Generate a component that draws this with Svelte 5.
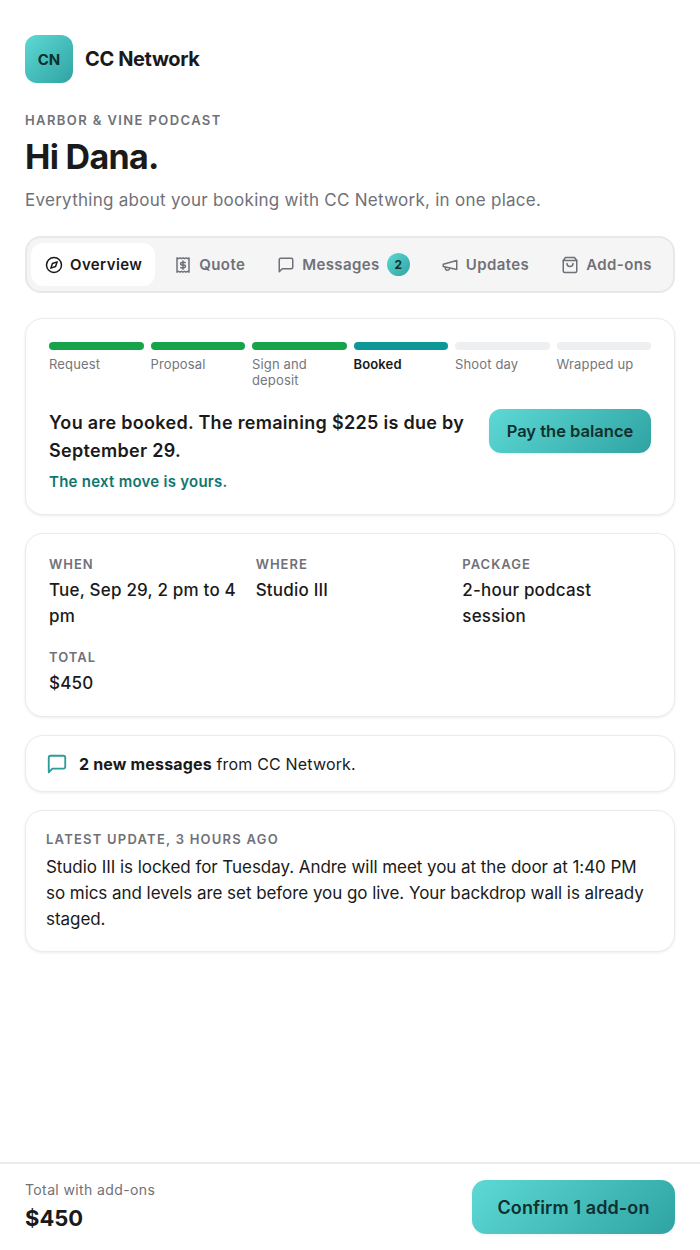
<script>
  const tabs = [
    { id: "overview", label: "Overview" },
    { id: "quote", label: "Quote" },
    { id: "messages", label: "Messages", badge: 2 },
    { id: "updates", label: "Updates" },
    { id: "addons", label: "Add-ons" },
  ];

  const steps = [
    { label: "Request", state: "done" },
    { label: "Proposal", state: "done" },
    { label: "Sign and deposit", state: "done" },
    { label: "Booked", state: "current" },
    { label: "Shoot day", state: "todo" },
    { label: "Wrapped up", state: "todo" },
  ];

  const facts = [
    { label: "When", value: "Tue, Sep 29, 2 pm to 4 pm" },
    { label: "Where", value: "Studio III" },
    { label: "Package", value: "2-hour podcast session" },
    { label: "Total", value: "$450" },
  ];

  let active = $state("overview");
</script>

<div class="page">
  <main>
    <header class="brand">
      <div class="logo">CN</div>
      <span class="brand-name">CC Network</span>
    </header>

    <section class="intro">
      <p class="eyebrow">Harbor &amp; Vine Podcast</p>
      <h1>Hi Dana.</h1>
      <p class="lead">Everything about your booking with CC Network, in one place.</p>
    </section>

    <nav class="tabs">
      {#each tabs as tab}
        <button class="tab" class:active={active === tab.id} onclick={() => (active = tab.id)}>
          <svg viewBox="0 0 24 24" class="icon">
            {#if tab.id === "overview"}
              <circle cx="12" cy="12" r="10" />
              <path d="m16.2 7.8-2.1 6.3-6.3 2.1 2.1-6.3z" />
            {:else if tab.id === "quote"}
              <path d="M4 2.500v19l2-1 2 1 2-1 2 1 2-1 2 1 2-1 2 1v-19l-2 1-2-1-2 1-2-1-2 1-2-1-2 1z" />
              <path d="M15 8.500h-4.500a1.750 1.750 0 0 0 0 3.500h3a1.750 1.750 0 0 1 0 3.500H9M12 6.500v11" />
            {:else if tab.id === "messages"}
              <path d="M21 15a2 2 0 0 1-2 2H7l-4 4V5a2 2 0 0 1 2-2h14a2 2 0 0 1 2 2z" />
            {:else if tab.id === "updates"}
              <path d="m3 11 18-5v12L3 14z" />
              <path d="M11.600 16.800a3 3 0 1 1-5.800-1.600" />
            {:else}
              <path d="M6 2 3 6v14a2 2 0 0 0 2 2h14a2 2 0 0 0 2-2V6l-3-4z" />
              <path d="M3 6h18M16 10a4 4 0 0 1-8 0" />
            {/if}
          </svg>
          <span>{tab.label}</span>
          {#if tab.badge}<span class="badge">{tab.badge}</span>{/if}
        </button>
      {/each}
    </nav>

    <section class="card status">
      <ol class="steps">
        {#each steps as step}
          <li class={step.state}>
            <span class="bar"></span>
            <span class="step-label">{step.label}</span>
          </li>
        {/each}
      </ol>
      <div class="next">
        <div class="next-text">
          <p class="next-title">You are booked. The remaining $225 is due by September 29.</p>
          <p class="next-hint">The next move is yours.</p>
        </div>
        <button class="cta small">Pay the balance</button>
      </div>
    </section>

    <section class="card facts">
      {#each facts as fact}
        <div>
          <p class="fact-label">{fact.label}</p>
          <p class="fact-value">{fact.value}</p>
        </div>
      {/each}
    </section>

    <section class="card notice">
      <svg viewBox="0 0 24 24" class="icon notice-icon">
        <path d="M21 15a2 2 0 0 1-2 2H7l-4 4V5a2 2 0 0 1 2-2h14a2 2 0 0 1 2 2z" />
      </svg>
      <p><strong>2 new messages</strong> from CC Network.</p>
    </section>

    <section class="card update">
      <p class="update-label">Latest update, 3 hours ago</p>
      <p class="update-body">
        Studio III is locked for Tuesday. Andre will meet you at the door at 1:40 PM so mics and levels are set before you go live. Your backdrop wall is already staged.
      </p>
    </section>
  </main>

  <footer>
    <div class="total">
      <p class="total-label">Total with add-ons</p>
      <p class="total-value">$450</p>
    </div>
    <button class="cta large">Confirm 1 add-on</button>
  </footer>
</div>

<style>
  :global(body) {
    font-family: "Inter", "Open Sans", sans-serif;
    color: #1a1a1a;
    background: #fff;
  }

  p,
  h1,
  ol {
    margin: 0;
    padding: 0;
  }

  button {
    font-family: inherit;
    border: 0;
    cursor: pointer;
  }

  .page {
    min-height: 100vh;
    display: flex;
    flex-direction: column;
  }

  main {
    flex: 1;
    padding: 35px 25px 0;
  }

  .brand {
    display: flex;
    align-items: center;
    gap: 12px;
  }

  .logo {
    width: 48px;
    height: 48px;
    border-radius: 12px;
    background: linear-gradient(135deg, #5dd9d5, #2fa3a3);
    display: flex;
    align-items: center;
    justify-content: center;
    font-size: 15px;
    font-weight: 700;
    color: #10302f;
  }

  .brand-name {
    font-size: 20px;
    font-weight: 700;
    letter-spacing: -0.38px;
  }

  .intro {
    margin-top: 29px;
  }

  .eyebrow {
    font-size: 13px;
    line-height: 17px;
    font-weight: 600;
    letter-spacing: 1.4px;
    text-transform: uppercase;
    color: #6f7178;
  }

  h1 {
    margin-top: 8px;
    font-size: 34px;
    line-height: 40px;
    font-weight: 700;
    letter-spacing: -0.7px;
  }

  .lead {
    margin-top: 10px;
    font-size: 17px;
    line-height: 26px;
    letter-spacing: 0.27px;
    color: #6f7178;
  }

  .tabs {
    margin-top: 23px;
    height: 57px;
    box-sizing: border-box;
    padding: 5px 4px;
    display: flex;
    gap: 5px;
    background: #f5f5f5;
    border: 2px solid #e8e8e8;
    border-radius: 16px;
  }

  .tab {
    display: flex;
    align-items: center;
    gap: 7px;
    padding: 0 13px 0 14px;
    height: 43px;
    margin: 0;
    border-radius: 12px;
    background: none;
    font-size: 15px;
    font-weight: 600;
    letter-spacing: 0.4px;
    color: #6f7178;
    white-space: nowrap;
  }

  .tab.active {
    background: #fff;
    color: #1a1a1a;
  }

  .icon {
    width: 18px;
    height: 18px;
    flex: none;
    fill: none;
    stroke: currentColor;
    stroke-width: 2;
    stroke-linecap: round;
    stroke-linejoin: round;
  }

  .badge {
    width: 23px;
    height: 23px;
    margin-left: 0;
    margin-right: -1px;
    border-radius: 50%;
    background: linear-gradient(135deg, #5dd9d5, #2fa3a3);
    color: #10302f;
    font-size: 12px;
    font-weight: 700;
    letter-spacing: 0;
    display: flex;
    align-items: center;
    justify-content: center;
  }

  .card {
    background: #fff;
    border: 1px solid #ebebeb;
    border-radius: 18px;
    box-shadow: 0 1px 3px rgba(0, 0, 0, 0.08);
  }

  .status {
    margin-top: 25px;
    padding: 23px 23px 22px;
    height: 197px;
    box-sizing: border-box;
  }

  .steps {
    list-style: none;
    display: grid;
    grid-template-columns: repeat(6, 1fr);
    gap: 7px;
  }

  .steps li {
    display: flex;
    flex-direction: column;
    gap: 6px;
  }

  .bar {
    height: 8px;
    border-radius: 4px;
    background: #eeeff0;
  }

  .done .bar {
    background: #16a34a;
  }

  .current .bar {
    background: #0d9797;
  }

  .step-label {
    font-size: 13px;
    line-height: 16px;
    letter-spacing: 0.15px;
    color: #74767c;
  }

  .current .step-label {
    font-weight: 600;
    color: #1a1a1a;
  }

  .next {
    margin-top: 21px;
    display: flex;
    align-items: flex-start;
    gap: 24px;
  }

  .next-text {
    flex: 1;
  }

  .next-title {
    font-size: 18px;
    line-height: 28px;
    font-weight: 600;
    letter-spacing: 0.3px;
  }

  .next-hint {
    margin-top: 7px;
    font-size: 15px;
    line-height: 20px;
    font-weight: 600;
    letter-spacing: 0.26px;
    color: #0f766e;
  }

  .cta {
    background: linear-gradient(135deg, #5dd9d5, #2fa3a3);
    color: #10302f;
    font-weight: 600;
    white-space: nowrap;
    box-shadow: 0 1px 3px rgba(0, 0, 0, 0.06);
  }

  .cta.small {
    width: 162px;
    height: 44px;
    border-radius: 12px;
    font-size: 16.5px;
  }

  .cta.large {
    width: 203px;
    height: 54px;
    border-radius: 14px;
    font-size: 18px;
    letter-spacing: 0.1px;
  }

  .facts {
    margin-top: 18px;
    padding: 22px 23px 20px;
    display: grid;
    grid-template-columns: repeat(3, 1fr);
    column-gap: 18px;
    row-gap: 20px;
  }

  .fact-label {
    font-size: 13px;
    line-height: 16px;
    font-weight: 600;
    letter-spacing: 1px;
    text-transform: uppercase;
    color: #6f7178;
  }

  .fact-value {
    margin-top: 5px;
    font-size: 17px;
    line-height: 26px;
    font-weight: 500;
    letter-spacing: 0.2px;
  }

  .notice {
    margin-top: 18px;
    height: 57px;
    box-sizing: border-box;
    padding: 0 20px;
    display: flex;
    align-items: center;
    gap: 11px;
    font-size: 16px;
    letter-spacing: 0.17px;
  }

  .notice strong {
    font-weight: 700;
  }

  .notice-icon {
    width: 22px;
    height: 22px;
    color: #2b9c9c;
  }

  .update {
    margin-top: 18px;
    padding: 20px 20px 19px;
  }

  .update-label {
    font-size: 13px;
    line-height: 17px;
    font-weight: 600;
    letter-spacing: 1.23px;
    text-transform: uppercase;
    color: #6f7178;
  }

  .update-body {
    margin-top: 6px;
    font-size: 17px;
    line-height: 26px;
    letter-spacing: -0.05px;
  }

  footer {
    height: 88px;
    box-sizing: border-box;
    border-top: 2px solid #ececec;
    padding: 0 25px;
    display: flex;
    align-items: center;
    justify-content: space-between;
  }

  .total {
    padding-bottom: 2px;
  }

  .total-label {
    font-size: 14px;
    line-height: 19px;
    letter-spacing: 0.38px;
    color: #6f7178;
  }

  .total-value {
    margin-top: 6px;
    font-size: 22px;
    line-height: 27px;
    font-weight: 700;
  }
</style>
